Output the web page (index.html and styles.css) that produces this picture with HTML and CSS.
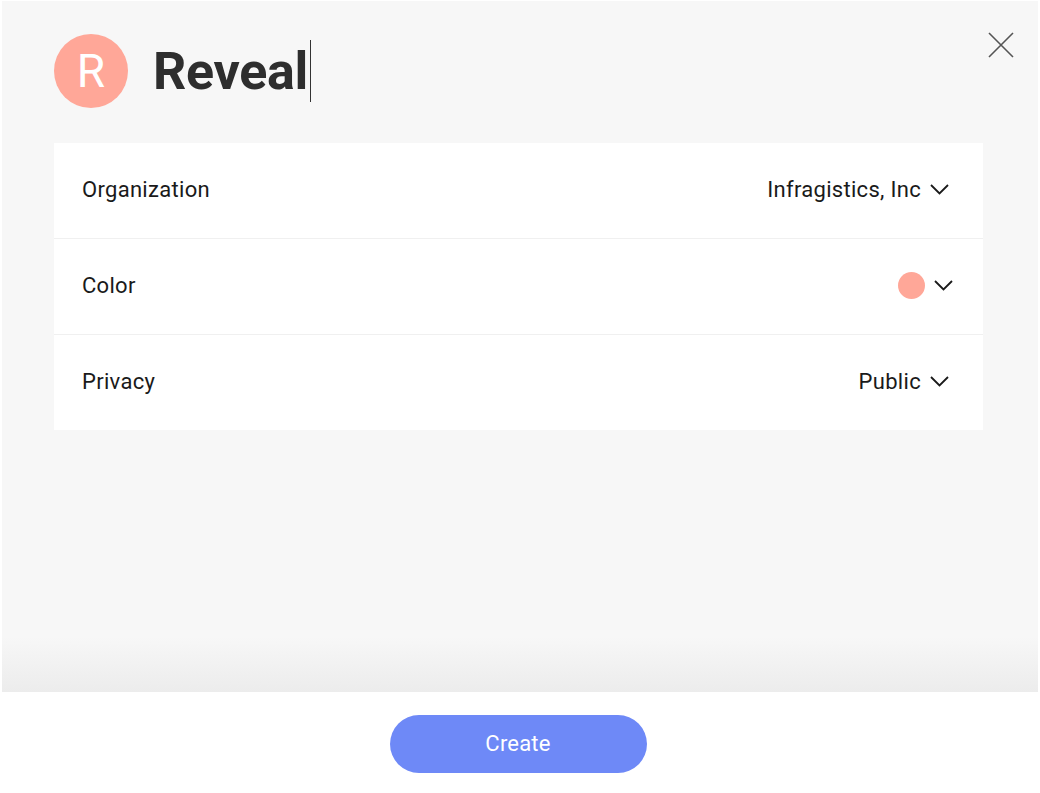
FILE: index.html
```html
<!DOCTYPE html>
<html lang="en">

<head>
  <meta charset="UTF-8" />
  <meta name="viewport" content="width=device-width, initial-scale=1.0" />
  <title>New Workspace</title>
  <link rel="stylesheet" href="styles.css">
</head>

<body>
  <div class="dialog">
    <div class="content">
      <div class="head">
        <span class="avatar">R</span>
        <span class="name">Reveal<i class="caret"></i></span>
        <button class="close" aria-label="Close">
          <svg width="26" height="26" viewBox="0 0 26 26">
            <path d="M1 1 L25 25 M25 1 L1 25" stroke="#555" stroke-width="1.6" fill="none" />
          </svg>
        </button>
      </div>

      <div class="card">
        <div class="row">
          <span class="label">Organization</span>
          <span class="value">Infragistics, Inc
            <svg class="chev" width="19" height="11" viewBox="0 0 19 11">
              <path d="M1 1 L9.5 9.5 L18 1" stroke="#1a1a1a" stroke-width="1.8" fill="none" />
            </svg>
          </span>
        </div>
        <div class="row">
          <span class="label">Color</span>
          <span class="value color">
            <i class="dot"></i>
            <svg class="chev" width="19" height="11" viewBox="0 0 19 11">
              <path d="M1 1 L9.5 9.5 L18 1" stroke="#1a1a1a" stroke-width="1.8" fill="none" />
            </svg>
          </span>
        </div>
        <div class="row">
          <span class="label">Privacy</span>
          <span class="value">Public
            <svg class="chev" width="19" height="11" viewBox="0 0 19 11">
              <path d="M1 1 L9.5 9.5 L18 1" stroke="#1a1a1a" stroke-width="1.8" fill="none" />
            </svg>
          </span>
        </div>
      </div>
    </div>

    <div class="footer">
      <button class="create">Create</button>
    </div>
  </div>
</body>

</html>
```

FILE: styles.css
```css
* {
  box-sizing: border-box;
}

html,
body {
  margin: 0;
  height: 100%;
  background-color: #fff;
}

body {
  font-family: Roboto, "Noto Sans", sans-serif;
  color: #1a1a1a;
}

.dialog {
  display: flex;
  flex-direction: column;
  height: 100%;
}

.content {
  flex: 1;
  margin: 1px 2px 0;
  padding: 32px 55px 0 52px;
  background: linear-gradient(to bottom, #f7f7f7 0, #f7f7f7 calc(100% - 55px), #ececec 100%);
}

.head {
  display: flex;
  align-items: center;
  height: 76px;
}

.avatar {
  width: 74px;
  height: 74px;
  border-radius: 50%;
  background-color: #ffa798;
  color: #fff;
  font-size: 46px;
  line-height: 74px;
  text-align: center;
}

.name {
  display: flex;
  align-items: center;
  margin-left: 25px;
  font-size: 52px;
  font-weight: 700;
  color: #2e2e2e;
  letter-spacing: -0.3px;
}

.caret {
  display: block;
  width: 1.5px;
  height: 62px;
  margin-left: 2px;
  background-color: #333;
}

.close {
  margin-left: auto;
  margin-top: -52px;
  margin-right: -31px;
  padding: 0;
  border: 0;
  background: none;
  display: flex;
}

.card {
  margin-top: 34px;
  width: 929px;
  background-color: #fff;
}

.row {
  display: flex;
  align-items: center;
  justify-content: space-between;
  height: 96px;
  padding: 0 34px 2px 28px;
  border-top: 1px solid #f0f0f0;
  font-size: 22px;
  letter-spacing: 0.3px;
}

.row:first-child {
  height: 95px;
  border-top: 0;
}

.value {
  display: flex;
  align-items: center;
  gap: 9px;
}

.value.color .chev {
  margin-right: -4px;
}

.dot {
  display: block;
  width: 27px;
  height: 27px;
  border-radius: 50%;
  background-color: #ffa798;
}

.footer {
  height: 101px;
  display: flex;
  justify-content: center;
  align-items: center;
  padding: 2px 4px 0 0;
}

.create {
  width: 257px;
  height: 58px;
  border: 0;
  border-radius: 29px;
  background-color: #6e89f7;
  color: #fff;
  font-family: Roboto, sans-serif;
  font-size: 22px;
  font-weight: 400;
  letter-spacing: 0.2px;
}
```
